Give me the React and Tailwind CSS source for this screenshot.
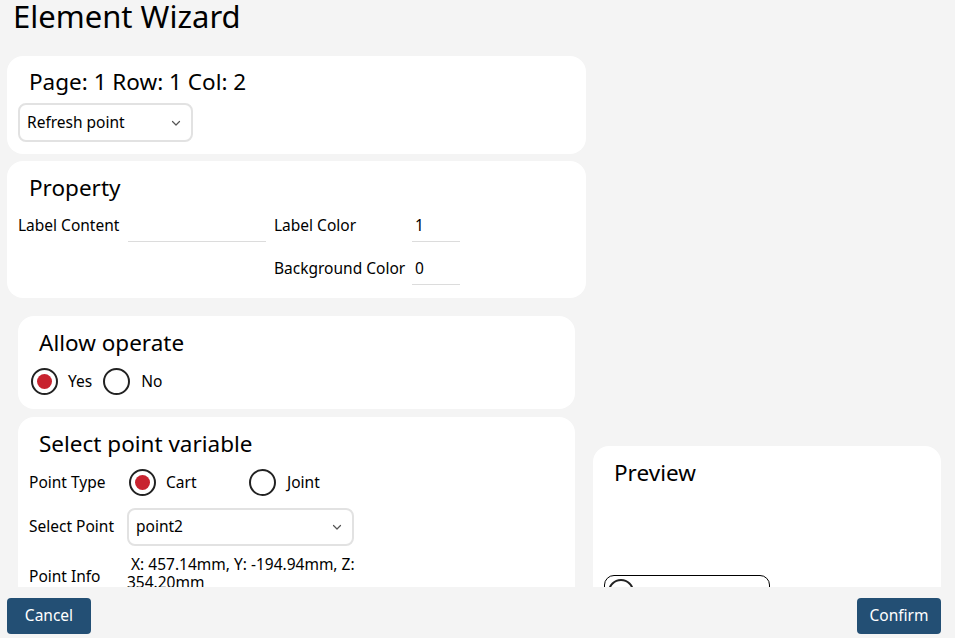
import React from "react";

const font = { fontFamily: '"Noto Sans", "Open Sans", sans-serif' };

function Chevron() {
  return (
    <svg width="12" height="12" viewBox="0 0 12 12" className="shrink-0">
      <path d="M2.5 4.5 L6 8 L9.5 4.5" fill="none" stroke="#555" strokeWidth="1.2" strokeLinecap="round" strokeLinejoin="round" />
    </svg>
  );
}

function Radio({ checked }) {
  return (
    <span className="w-[27px] h-[27px] rounded-full border-[2.5px] border-[#222] flex items-center justify-center shrink-0 bg-white">
      {checked && <span className="w-[15px] h-[15px] rounded-full bg-[#c8232f]" />}
    </span>
  );
}

function Select({ value, className }) {
  return (
    <div className={"flex items-center justify-between border-2 border-[#e2e2e2] rounded-[8px] bg-white pl-[7px] pr-[9px] text-[15.5px] text-black " + className}>
      <span>{value}</span>
      <Chevron />
    </div>
  );
}

function Field({ value, className = "" }) {
  return (
    <div className={"border-b border-[#dcdcdc] h-[32px] flex items-center px-[3px] text-[15.5px] " + className}>
      {value}
    </div>
  );
}

export default function App() {
  return (
    <div className="w-[955px] h-[638px] bg-[#f4f4f4] flex flex-col overflow-hidden text-black" style={font}>
      <div className="h-[587px] overflow-hidden shrink-0">
        <h1 className="h-[56px] pl-[13px] text-[31px] leading-[32px]">Element Wizard</h1>
        <div className="flex gap-[7px] px-[7px]">
          <div className="w-[579px] flex flex-col shrink-0">
            <div className="bg-white rounded-[16px] h-[98px] pt-[11px]">
              <div className="pl-[22px] text-[22.5px] leading-[30px]">Page: 1 Row: 1 Col: 2</div>
              <Select value="Refresh point" className="ml-[11px] mt-[6px] w-[175px] h-[39px]" />
            </div>

            <div className="bg-white rounded-[16px] h-[137px] mt-[7px] pt-[12px]">
              <div className="pl-[22px] text-[22.5px] leading-[30px]">Property</div>
              <div className="grid grid-cols-[110px_138px_8px_138px_48px] pl-[11px] mt-[7px] text-[15.5px] items-end gap-y-[11px]">
                <div className="h-[32px] flex items-center">Label Content</div>
                <Field value="" />
                <div />
                <div className="h-[32px] flex items-center">Label Color</div>
                <Field value="1" />
                <div />
                <div />
                <div />
                <div className="h-[32px] flex items-center">Background Color</div>
                <Field value="0" />
              </div>
            </div>

            <div className="px-[11px] pt-[18px] flex flex-col gap-[8px]">
              <div className="bg-white rounded-[16px] h-[93px] pt-[12px]">
                <div className="pl-[21px] text-[22.5px] leading-[30px]">Allow operate</div>
                <div className="flex items-center pl-[13px] mt-[10px] text-[15.5px]">
                  <Radio checked />
                  <span className="ml-[10px]">Yes</span>
                  <span className="ml-[11px]"><Radio /></span>
                  <span className="ml-[11px]">No</span>
                </div>
              </div>

              <div className="bg-white rounded-[16px] h-[240px] pt-[12px]">
                <div className="pl-[21px] text-[22.5px] leading-[30px]">Select point variable</div>
                <div className="grid grid-cols-[98px_1fr] pl-[11px] text-[15.5px] mt-[10px] items-center">
                  <div>Point Type</div>
                  <div className="flex items-center h-[27px] pl-[2px]">
                    <Radio checked />
                    <span className="ml-[10px] w-[83px]">Cart</span>
                    <Radio />
                    <span className="ml-[11px]">Joint</span>
                  </div>
                  <div className="mt-[12px]">Select Point</div>
                  <Select value="point2" className="mt-[12px] w-[227px] h-[38px]" />
                  <div className="mt-[17px]">Point Info</div>
                  <div className="mt-[9px] w-[240px] leading-[18px] text-[15.5px]">&nbsp;X: 457.14mm, Y: -194.94mm, Z: 354.20mm</div>
                </div>
              </div>
            </div>
          </div>

          <div className="w-[348px] shrink-0 pt-[390px]">
            <div className="bg-white rounded-[16px] h-[240px] pt-[12px]">
              <div className="pl-[21px] text-[22.5px] leading-[30px]">Preview</div>
              <div className="ml-[11px] mt-[87px] w-[166px] h-[34px] border border-black rounded-[10px] flex items-center pl-[3px]">
                <span className="w-[26px] h-[26px] rounded-full border-[2px] border-[#222]" />
              </div>
            </div>
          </div>
        </div>
      </div>

      <div className="h-[51px] flex justify-between items-start pl-[7px] pr-[14px] pt-[11px]">
        <button className="w-[84px] h-[36px] rounded-[4px] bg-[#234f74] text-white text-[15.5px]">Cancel</button>
        <button className="w-[84px] h-[36px] rounded-[4px] bg-[#234f74] text-white text-[15.5px]">Confirm</button>
      </div>
    </div>
  );
}
